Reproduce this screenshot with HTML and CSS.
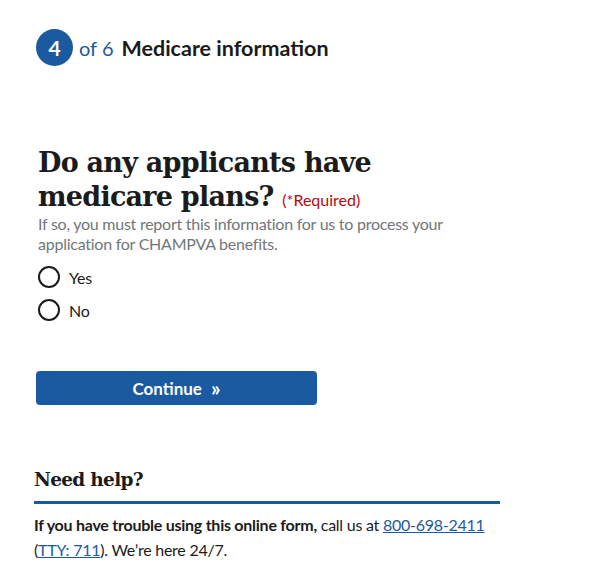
FILE: index.html
```html
<!DOCTYPE html>
<html lang="en">
<head>
<meta charset="utf-8">
<title>Medicare information</title>
<link rel="stylesheet" href="styles.css">
</head>
<body>
<main class="page">
  <div class="step">
    <span class="step-num">4</span>
    <span class="step-of">of 6</span>
    <span class="step-title">Medicare information</span>
  </div>

  <fieldset class="question">
    <h1 class="q-title">Do any applicants have medicare plans? <span class="required">(*Required)</span></h1>
    <p class="hint">If so, you must report this information for us to process your application for CHAMPVA benefits.</p>
    <div class="options">
      <label class="option"><span class="radio"></span>Yes</label>
      <label class="option"><span class="radio"></span>No</label>
    </div>
  </fieldset>

  <button class="continue" type="button">Continue <span class="chev">&raquo;</span></button>

  <section class="help">
    <h2 class="help-title">Need help?</h2>
    <p class="help-text"><strong>If you have trouble using this online form,</strong> call us at <a href="#">800-698-2411</a> (<a href="#">TTY: 711</a>). We’re here 24/7.</p>
  </section>
</main>
</body>
</html>
```
FILE: styles.css
```css
* { box-sizing: border-box; }
body {
  margin: 0;
  background: #fff;
  color: #1b1b1b;
  font-family: "Source Sans Pro", Lato, "Noto Sans", sans-serif;
  letter-spacing: -0.25px;
}
.page {
  padding: 29px 0 0 36px;
  width: 600px;
}
.step {
  display: flex;
  align-items: center;
  height: 37px;
}
.step-num {
  width: 37px;
  height: 37px;
  border-radius: 50%;
  background: #1b5aa0;
  color: #fff;
  font-size: 21px;
  font-weight: 700;
  letter-spacing: 0;
  display: flex;
  align-items: center;
  justify-content: center;
}
.step-of {
  margin-left: 6px;
  font-size: 20px;
  letter-spacing: 0;
  color: #1b5aa0;
}
.step-title {
  margin-left: 8px;
  font-size: 21.5px;
  font-weight: 700;
  letter-spacing: 0;
  color: #1b1b1b;
}
.question {
  border: 0;
  margin: 80px 0 0 2px;
  padding: 0;
}
.q-title {
  margin: 0;
  font-family: "DejaVu Serif", serif;
  font-weight: 700;
  font-size: 27px;
  line-height: 34px;
  letter-spacing: -0.75px;
  width: 380px;
}
.required {
  font-family: Lato, "Noto Sans", sans-serif;
  font-weight: 400;
  font-size: 16px;
  line-height: 1;
  letter-spacing: 0;
  color: #b50909;
}
.hint {
  margin: 0;
  font-size: 16px;
  line-height: 20px;
  color: #71767a;
  width: 420px;
}
.options {
  margin-top: 11px;
  display: flex;
  flex-direction: column;
  gap: 9px;
}
.option {
  display: flex;
  align-items: center;
  height: 24px;
  font-size: 16px;
  color: #1b1b1b;
}
.radio {
  width: 22px;
  height: 22px;
  border: 2px solid #1b1b1b;
  border-radius: 50%;
  margin-right: 9px;
}
.continue {
  display: flex;
  align-items: center;
  justify-content: center;
  margin-top: 49px;
  width: 281px;
  height: 34px;
  border: 0;
  border-radius: 4px;
  background: #1b5aa0;
  color: #fff;
  font-family: "Source Sans Pro", Lato, "Noto Sans", sans-serif;
  font-size: 17px;
  font-weight: 700;
  letter-spacing: 0;
  padding: 0;
}
.chev {
  margin-left: 9px;
  font-size: 21px;
  line-height: 1;
  position: relative;
  top: -1px;
}
.help {
  margin: 61px 0 0 -2px;
  width: 466px;
}
.help-title {
  margin: 0;
  font-family: "DejaVu Serif", serif;
  font-weight: 700;
  font-size: 18.5px;
  letter-spacing: -0.7px;
  line-height: 28px;
  padding-bottom: 7px;
  border-bottom: 3px solid #1b5aa0;
}
.help-text {
  margin: 8px 0 0;
  font-size: 16px;
  line-height: 25px;
}
.help-text a {
  color: #1b5aa0;
  white-space: nowrap;
}
```
